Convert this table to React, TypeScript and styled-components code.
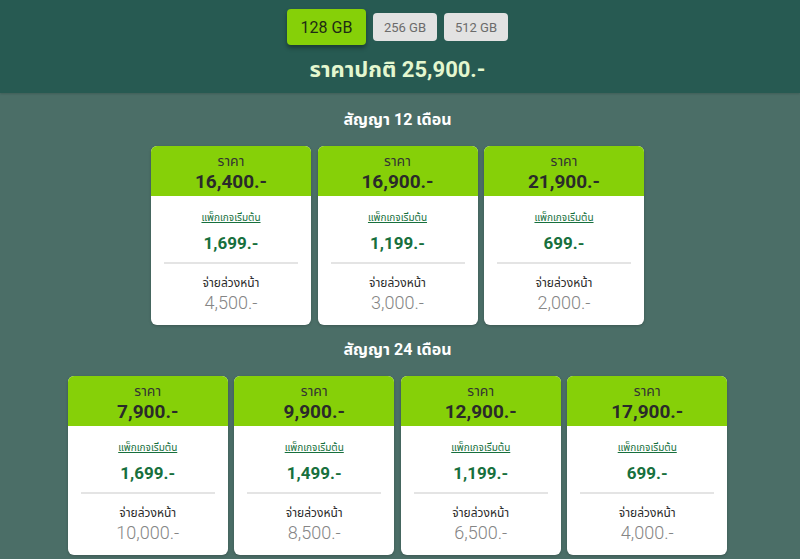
import styled, { createGlobalStyle } from "styled-components";

const GlobalStyle = createGlobalStyle`
  html, body {
    margin: 0;
    padding: 0;
    background: #4b6e67;
    font-family: Roboto, "Noto Sans Thai", "Noto Sans", sans-serif;
  }
`;

const headerColor = "#275a52";
const bodyColor = "#4b6e67";
const limeGreen = "#86d008";
const darkGreen = "#17703d";
const fontStack = `Roboto, "Noto Sans Thai", "Noto Sans", sans-serif`;

const Page = styled.div`
  width: 800px;
  height: 559px;
  overflow: hidden;
  background: ${bodyColor};
  font-family: ${fontStack};
`;

const Header = styled.div`
  background: ${headerColor};
  height: 93px;
  box-sizing: border-box;
  padding: 9px 5px 0 0;
  display: flex;
  flex-direction: column;
  align-items: center;
  box-shadow: 0 1px 2px rgba(0, 0, 0, 0.15);
`;

const SizeRow = styled.div`
  display: flex;
  align-items: center;
  gap: 7px;
  height: 36px;
`;

const SizeButton = styled.button<{ active?: boolean }>`
  border: none;
  border-radius: 4px;
  font-family: ${fontStack};
  cursor: pointer;
  background: ${({ active }) => (active ? limeGreen : "#e2e2e2")};
  color: ${({ active }) => (active ? "#1e2b14" : "#6b6b6b")};
  width: ${({ active }) => (active ? "79px" : "64px")};
  height: ${({ active }) => (active ? "36px" : "28px")};
  font-size: ${({ active }) => (active ? "16px" : "13px")};
  box-shadow: ${({ active }) =>
    active ? "0 3px 4px rgba(0, 0, 0, 0.35)" : "none"};
  padding: 0;
`;

const NormalPrice = styled.div`
  margin-top: 10px;
  color: #e4f7cf;
  font-size: 22px;
  font-weight: 700;
  line-height: 30px;
`;

const Section = styled.div`
  display: flex;
  flex-direction: column;
  align-items: center;
  padding-right: 5px;
`;

const SectionTitle = styled.div<{ gapTop: number }>`
  color: #ffffff;
  font-size: 16px;
  font-weight: 700;
  line-height: 20px;
  margin: ${({ gapTop }) => gapTop}px 0 16px;
`;

const CardRow = styled.div`
  display: flex;
  gap: 6.5px;
`;

const Card = styled.div`
  width: 160px;
  height: 179px;
  background: #ffffff;
  border-radius: 6px;
  overflow: hidden;
  display: flex;
  flex-direction: column;
  box-shadow: 0 1px 3px rgba(0, 0, 0, 0.2);
`;

const CardTop = styled.div`
  background: ${limeGreen};
  height: 50px;
  box-sizing: border-box;
  padding-top: 6px;
  display: flex;
  flex-direction: column;
  align-items: center;
`;

const TopLabel = styled.div`
  font-size: 14px;
  color: #333333;
  line-height: 19px;
`;

const TopPrice = styled.div`
  font-size: 19px;
  font-weight: 700;
  color: #2a2a2a;
  line-height: 22px;
`;

const CardBody = styled.div`
  display: flex;
  flex-direction: column;
  align-items: center;
  padding-top: 15px;
`;

const PackageLink = styled.a`
  font-size: 10px;
  color: ${darkGreen};
  text-decoration: underline;
  line-height: 14px;
`;

const PackagePrice = styled.div`
  font-size: 17px;
  font-weight: 700;
  color: ${darkGreen};
  line-height: 22px;
  margin-top: 7px;
`;

const Divider = styled.div`
  width: 134px;
  height: 2px;
  background: #e4e4e4;
  margin: 8px 0 11px;
`;

const PayLabel = styled.div`
  font-size: 12px;
  color: #2a2a2a;
  line-height: 16px;
`;

const PayPrice = styled.div`
  font-size: 18px;
  color: #858585;
  line-height: 22px;
  font-weight: 300;
  margin-top: 1px;
`;

interface Plan {
  price: string;
  pack: string;
  pay: string;
}

const plans12: Plan[] = [
  { price: "16,400.-", pack: "1,699.-", pay: "4,500.-" },
  { price: "16,900.-", pack: "1,199.-", pay: "3,000.-" },
  { price: "21,900.-", pack: "699.-", pay: "2,000.-" },
];

const plans24: Plan[] = [
  { price: "7,900.-", pack: "1,699.-", pay: "10,000.-" },
  { price: "9,900.-", pack: "1,499.-", pay: "8,500.-" },
  { price: "12,900.-", pack: "1,199.-", pay: "6,500.-" },
  { price: "17,900.-", pack: "699.-", pay: "4,000.-" },
];

const PlanCard = ({ plan }: { plan: Plan }) => (
  <Card>
    <CardTop>
      <TopLabel>ราคา</TopLabel>
      <TopPrice>{plan.price}</TopPrice>
    </CardTop>
    <CardBody>
      <PackageLink>แพ็กเกจเริ่มต้น</PackageLink>
      <PackagePrice>{plan.pack}</PackagePrice>
      <Divider />
      <PayLabel>จ่ายล่วงหน้า</PayLabel>
      <PayPrice>{plan.pay}</PayPrice>
    </CardBody>
  </Card>
);

export default function App() {
  return (
    <Page>
      <GlobalStyle />
      <Header>
        <SizeRow>
          <SizeButton active>128 GB</SizeButton>
          <SizeButton>256 GB</SizeButton>
          <SizeButton>512 GB</SizeButton>
        </SizeRow>
        <NormalPrice>ราคาปกติ 25,900.-</NormalPrice>
      </Header>
      <Section>
        <SectionTitle gapTop={17}>สัญญา 12 เดือน</SectionTitle>
        <CardRow>
          {plans12.map((p) => (
            <PlanCard key={p.price} plan={p} />
          ))}
        </CardRow>
      </Section>
      <Section>
        <SectionTitle gapTop={15}>สัญญา 24 เดือน</SectionTitle>
        <CardRow>
          {plans24.map((p) => (
            <PlanCard key={p.price} plan={p} />
          ))}
        </CardRow>
      </Section>
    </Page>
  );
}
